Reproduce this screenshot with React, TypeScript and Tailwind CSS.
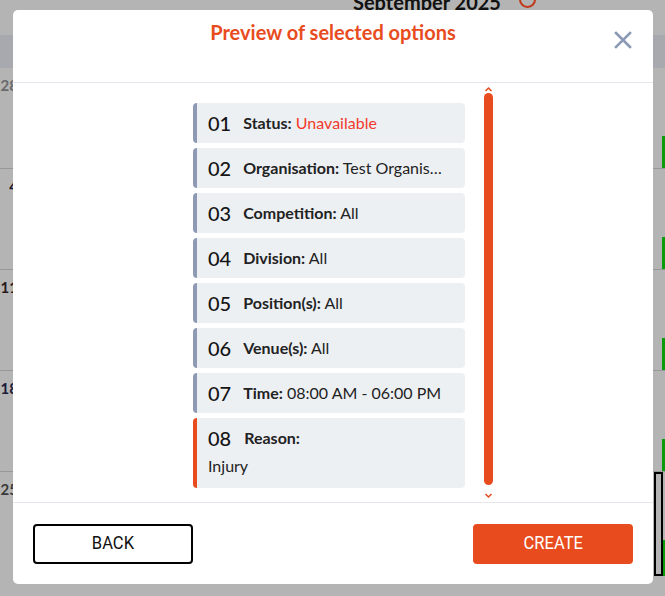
import React from 'react';

const items = [
  { no: '01', label: 'Status:', value: 'Unavailable', valueClass: 'text-[#f2392b]' },
  { no: '02', label: 'Organisation:', value: 'Test Organisation One' },
  { no: '03', label: 'Competition:', value: 'All' },
  { no: '04', label: 'Division:', value: 'All' },
  { no: '05', label: 'Position(s):', value: 'All' },
  { no: '06', label: 'Venue(s):', value: 'All' },
  { no: '07', label: 'Time:', value: '08:00 AM - 06:00 PM' },
];

const weeks = [
  { d: '4', c: 'text-[#1a1a2a]' },
  { d: '11', c: 'text-[#2a1a1a]' },
  { d: '18', c: 'text-[#1a1a3a]' },
];

const App: React.FC = () => {
  return (
    <div className="relative w-[665px] h-[596px] overflow-hidden bg-[#b4b4b4] font-['Lato',sans-serif]">
      {/* calendar behind the overlay */}
      <div className="h-[35px] flex pl-[353px]">
        <span className="-mt-[13px] text-[20px] font-bold text-[#111]">September 2025</span>
        <span className="-mt-[9px] ml-[18px] w-[17px] h-[17px] rounded-full border-2 border-[#c0391b]" />
      </div>
      <div className="h-[33px] bg-[#a8a9ae]" />
      <div className="h-[101px] border-b border-[#989898] flex justify-between">
        <span className="w-[18px] text-right text-[15px] font-bold text-[#6a6a6a] pt-[6px]">28</span>
        <span className="mt-[68px] w-[3px] h-[32px] bg-[#0a9a0a]" />
      </div>
      {weeks.map((w) => (
        <div key={w.d} className="h-[101px] border-b border-[#989898] flex justify-between">
          <span className={`w-[18px] text-right text-[15px] font-bold pt-[6px] ${w.c}`}>{w.d}</span>
          <span className="mt-[68px] w-[3px] h-[32px] bg-[#0a9a0a]" />
        </div>
      ))}
      <div className="h-[104px] flex justify-between">
        <span className="w-[18px] text-right text-[15px] font-bold pt-[6px] text-[#3a3a3a]">25</span>
        <div className="flex h-[104px]">
          <span className="w-[9px] border-2 border-black" />
          <span className="mt-[68px] w-[2px] h-[36px] bg-[#0a9a0a]" />
        </div>
      </div>

      {/* modal */}
      <div className="absolute left-[13px] top-[10px] w-[640px] h-[574px] bg-white rounded-[5px] flex flex-col">
        <div className="relative h-[73px] border-b border-[#e6e7ee] flex justify-center">
          <h2 className="pt-[7px] text-[20px] font-bold text-[#e84c1e]">Preview of selected options</h2>
          <svg className="absolute left-[601px] top-[21px]" width="18" height="18" viewBox="0 0 18 18">
            <path d="M2 2 L16 16 M16 2 L2 16" stroke="#8c99b4" strokeWidth="2.6" strokeLinecap="square" />
          </svg>
        </div>

        <div className="h-[420px] flex pl-[180px] border-b border-[#e6e7ee]">
          <div className="w-[272px] pt-[20px] flex flex-col gap-[5px]">
            {items.map((it) => (
              <div key={it.no} className="h-[40px] bg-[#edf0f3] rounded-[4px] border-l-4 border-[#8e9ab3] flex items-center pl-[11px] pr-[18px] text-[#222]">
                <span className="text-[20px] font-medium mr-[12px] shrink-0 text-[#151515]">{it.no}</span>
                <span className="truncate text-[16px]">
                  <span className="font-bold">{it.label}</span>{' '}
                  <span className={it.valueClass ?? ''}>{it.value}</span>
                </span>
              </div>
            ))}
            <div className="h-[70px] bg-[#edf0f3] rounded-[4px] border-l-4 border-[#e84c1e] pl-[11px] pt-[5px] text-[#222]">
              <div className="flex items-center">
                <span className="text-[20px] font-medium mr-[13px] text-[#151515]">08</span>
                <span className="text-[16px] font-bold">Reason:</span>
              </div>
              <div className="text-[16px] mt-[1px]">Injury</div>
            </div>
          </div>

          {/* scrollbar */}
          <div className="ml-[19px] w-[9px] flex flex-col items-center pt-[3px]">
            <svg width="9" height="6" viewBox="0 0 9 6">
              <path d="M1.5 5 L4.5 2 L7.5 5" stroke="#e84c1e" strokeWidth="1.5" fill="none" />
            </svg>
            <div className="mt-[1px] w-[9px] h-[392px] bg-[#e84c1e] rounded-[5px]" />
            <svg className="mt-[8px]" width="9" height="6" viewBox="0 0 9 6">
              <path d="M1.5 1 L4.5 4 L7.5 1" stroke="#e84c1e" strokeWidth="1.5" fill="none" />
            </svg>
          </div>
        </div>

        <div className="flex-1 flex justify-between items-start px-[20px] pt-[21px] font-['Roboto',sans-serif]">
          <button className="w-[160px] h-[40px] border-2 border-black rounded-[4px] text-[18px] leading-none pb-[2px] text-[#111]">
            <span className="inline-block scale-x-[0.92]">BACK</span>
          </button>
          <button className="w-[160px] h-[40px] bg-[#e84c1e] rounded-[4px] text-[18px] leading-none pb-[2px] text-white">
            <span className="inline-block scale-x-[0.92]">CREATE</span>
          </button>
        </div>
      </div>
    </div>
  );
};

export default App;
